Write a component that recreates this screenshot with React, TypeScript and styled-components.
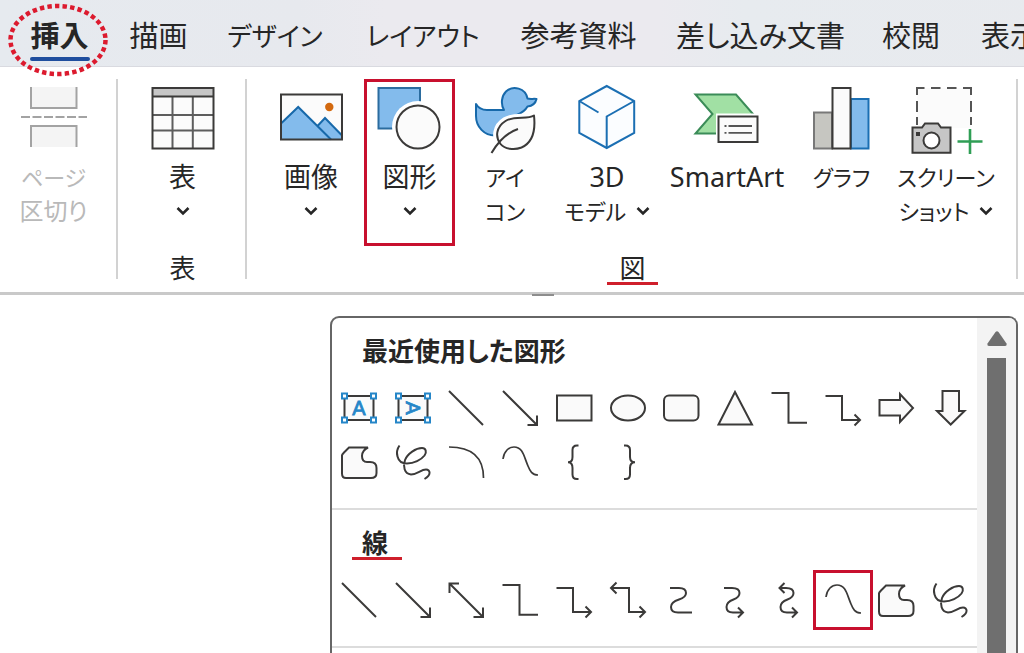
import React from "react";
import styled, { createGlobalStyle, css } from "styled-components";

const ink = "#3b3a39";
const red = "#c8102e";

const GlobalStyle = createGlobalStyle`
  *, *::before, *::after { box-sizing: border-box; }
  body {
    margin: 0;
    background: #fff;
    color: #262626;
    font-family: "Noto Sans", "Noto Sans CJK JP", sans-serif;
    font-feature-settings: "palt";
  }
  button {
    margin: 0;
    padding: 0;
    border: 0;
    background: none;
    color: inherit;
    font: inherit;
    font-feature-settings: inherit;
  }
  svg { display: block; overflow: visible; }
`;

const Page = styled.div`
  display: flex;
  flex-direction: column;
  height: 100vh;
  overflow: hidden;
`;

const TabBar = styled.nav`
  display: grid;
  grid-template-columns: 101fr 97fr 136fr 160fr 151fr 213fr 88fr 110fr;
  padding: 15px 0 6px 9px;
  margin-right: -41px;
  border-bottom: 1px solid #d9dae0;
  background: linear-gradient(90deg, #e6eaef 0%, #e7e9ee 28%, #ebeaef 36%, #ebeaef 62%, #e7ebef 70%, #e8eaee 100%);
`;

const Tab = styled.button<{ $active?: boolean; $kana?: boolean }>`
  position: relative;
  display: flex;
  flex-direction: column;
  align-items: center;
  height: 45px;
  font-size: ${(p) => (p.$kana ? "26px" : "29px")};
  line-height: 42px;
  white-space: nowrap;
  font-weight: ${(p) => (p.$active ? 700 : 400)};

  ${(p) =>
    p.$active &&
    css`
      &::after {
        content: "";
        width: 60px;
        height: 4px;
        flex: none;
        border-radius: 2px;
        background: #1f4e9e;
      }
    `}
`;

const DottedRing = styled.svg`
  position: absolute;
  z-index: 1;
  left: 50%;
  top: -12px;
  width: 100px;
  height: 74px;
  margin-left: -52px;
`;

const Ribbon = styled.section`
  display: grid;
  grid-template-columns: 118fr 129fr 771fr 6fr;
  padding: 12px 0 6px;
  border-bottom: 3px solid #c9c9c9;
`;

const Group = styled.div`
  position: relative;
  display: flex;
  flex-direction: column;
  min-width: 0;
  height: 207px;

  &::after {
    content: "";
    position: absolute;
    right: 0;
    top: 0;
    width: 2px;
    height: 200px;
    background: #d2d2d2;
  }
`;

const GroupTools = styled.div<{ $columns: string; $inset?: string }>`
  display: grid;
  grid-template-columns: ${(p) => p.$columns};
  padding: ${(p) => p.$inset ?? "0"};
  height: 167px;
`;

const GroupName = styled.div`
  display: flex;
  justify-content: center;
  margin-top: 5px;
  font-size: 26px;
  line-height: 34px;
`;

const Marked = styled.span`
  display: inline-block;
  padding: 4px 12px 0;
  border-bottom: 3px solid #cf1f2b;
  line-height: 27px;
`;

const Tool = styled.button<{ $disabled?: boolean; $framed?: boolean }>`
  position: relative;
  display: flex;
  flex-direction: column;
  align-items: center;
  min-width: 0;
  padding-top: 5px;
  color: ${(p) => (p.$disabled ? "#b9b9b9" : "inherit")};
  line-height: 34px;
  white-space: nowrap;

  ${(p) =>
    p.$framed &&
    css`
      box-shadow: inset 0 0 0 3px ${red};
    `}
`;

const ToolArt = styled.svg`
  flex: none;
  width: 76px;
  height: 72px;
  margin-bottom: 4px;
`;

const LabelLine = styled.span<{ $kana?: boolean; $mixed?: boolean }>`
  display: flex;
  align-items: center;
  justify-content: center;
  gap: 10px;
  height: 34px;
  font-size: ${(p) => (p.$kana ? "22px" : p.$mixed ? "24px" : "27px")};
`;

const Workspace = styled.main`
  position: relative;
  flex: 1;
  min-height: 0;
  display: grid;
  grid-template-columns: 330fr 688fr 6fr;
  padding-top: 21px;
`;

const Handle = styled.span`
  position: absolute;
  top: -1px;
  left: 52%;
  width: 22px;
  height: 2px;
  background: #8d8d8d;
`;

const Gallery = styled.section`
  grid-column: 2;
  display: flex;
  min-height: 0;
  overflow: hidden;
  border: 2px solid #666;
  border-bottom: 0;
  border-radius: 9px 9px 0 0;
  background: #fff;
`;

const Sections = styled.div`
  flex: 1;
  min-width: 0;
`;

const Section = styled.section`
  padding: 16px 0 19px;
  border-bottom: 2px solid #dcdcdc;
`;

const SectionTitle = styled.h2<{ $marked?: boolean }>`
  display: table;
  height: 34px;
  margin: 0 0 13px 20px;
  padding: 0 14px 0 10px;
  font-size: 26px;
  font-weight: 700;
  line-height: 34px;

  ${(p) =>
    p.$marked &&
    css`
      padding-top: 4px;
      line-height: 27px;
      border-bottom: 3px solid #cf1f2b;
    `}
`;

const ShapeGrid = styled.div`
  display: grid;
  grid-template-columns: repeat(12, 1fr);
  grid-auto-rows: 54px;
`;

const ShapeButton = styled.button<{ $framed?: boolean }>`
  position: relative;
  display: flex;
  align-items: center;
  justify-content: center;

  ${(p) =>
    p.$framed &&
    css`
      &::after {
        content: "";
        position: absolute;
        inset: -3px;
        border: 3px solid ${red};
      }
    `}
`;

const ShapeArt = styled.svg`
  width: 38px;
  height: 38px;
  fill: none;
  stroke: ${ink};
  stroke-width: 2;
`;

const ScrollTrack = styled.div`
  flex: none;
  display: flex;
  flex-direction: column;
  align-items: center;
  gap: 12px;
  width: 39px;
  padding-top: 13px;
  background: #f3f3f3;
`;

const ScrollThumb = styled.div`
  flex: 1;
  width: 19px;
  background: #6f6f6f;
`;

const Chevron = () => (
  <svg width="14" height="10" viewBox="0 0 14 10" fill="none" stroke="#262626" strokeWidth="2.6">
    <path d="M1.5 2L7 7.5L12.5 2" />
  </svg>
);

const PageBreakArt = () => (
  <ToolArt viewBox="15 84 76 72" fill="#f4f4f4" stroke="#a3a3a3" strokeWidth="2">
    <path d="M30 87V108H75.500V87" />
    <path d="M30 147V126H75.500V147" />
    <path d="M20 117H86" strokeDasharray="9 2.500" strokeWidth="1.800" />
  </ToolArt>
);

const TableArt = () => (
  <ToolArt viewBox="145 84 76 72" fill="none">
    <rect x="152.500" y="88" width="61" height="60.500" fill="#fbfbfb" />
    <rect x="152.500" y="88" width="61" height="8.500" fill="#c6c6c6" />
    <path d="M172.500 97V148M192.800 97V148M153 115H213M153 130.500H213" stroke="#5d5d5d" strokeWidth="2" />
    <path d="M152.500 96.500H213.500" stroke={ink} strokeWidth="1.800" />
    <rect x="152.500" y="88" width="61" height="60.500" stroke={ink} strokeWidth="2" />
  </ToolArt>
);

const PictureArt = () => (
  <ToolArt viewBox="273 84 76 72" fill="none">
    <rect x="281" y="94.500" width="61" height="45" fill="#fbfbfb" />
    <path d="M317 126.500L325 118L342 135.500V139.500H329Z" fill="#83bbec" />
    <path d="M281 123.500L298.200 107L331 139.500H281Z" fill="#83bbec" />
    <path d="M281 123.500L298.200 107L331 139.500M317.500 126L325 118L342 135.500" stroke="#1769aa" strokeWidth="2" />
    <circle cx="329.300" cy="107" r="4.200" fill="#d3690f" />
    <rect x="281" y="94.500" width="61" height="45" stroke={ink} strokeWidth="2" />
  </ToolArt>
);

const ShapesArt = () => (
  <ToolArt viewBox="372 84 76 72">
    <rect x="378.500" y="88" width="41.500" height="40.500" fill="#83bbec" stroke="#2b6c9f" strokeWidth="2" />
    <circle cx="418" cy="127" r="26" fill="#fff" />
    <circle cx="418" cy="127" r="21.500" fill="#fbfbfb" stroke={ink} strokeWidth="2" />
  </ToolArt>
);

const DuckArt = () => (
  <ToolArt viewBox="467 84 76 72" strokeWidth="2" strokeLinejoin="round">
    <path
      d="M476 104C478.500 108.500 482 110 487 110H504C500.500 104 501.500 96 506 91.500C513 85 525.500 88 527.500 98.500C530.500 99.500 533 98.500 536.500 99C535.500 103.500 532 106 527.500 106.500C525 111 521.500 113 517 115L496 135.500C484 136 476 126.500 476 116Z"
      fill="#83bbec"
      stroke="#1769aa"
    />
    <path d="M534 115.500C527 120 515 115 505.500 121C496 127 495 137 500.500 144C504.500 149 514 150.500 521.500 147.500C534 142 535.500 129 534 115.500Z" fill="#fff" stroke="#fff" strokeWidth="8" />
    <path d="M534 115.500C527 120 515 115 505.500 121C496 127 495 137 500.500 144C504.500 149 514 150.500 521.500 147.500C534 142 535.500 129 534 115.500Z" fill="#fbfbfb" stroke={ink} />
    <path d="M518 129C506 133 498 142 491.500 153" fill="none" stroke={ink} />
  </ToolArt>
);

const CubeArt = () => (
  <ToolArt viewBox="569 84 76 72" fill="none" stroke="#1b6fb3" strokeWidth="2">
    <path d="M606.700 86L634.200 101V133L606.700 148L579.300 133V101Z" fill="#fbfdff" />
    <path d="M634.200 101L606.700 116.500V148M579.300 101L598.500 112.500" />
  </ToolArt>
);

const SmartArtArt = () => (
  <ToolArt viewBox="689 84 76 72" strokeWidth="2">
    <path d="M695.500 94.500H736L753 114L736 133.500H695.500L712.500 114Z" fill="#a1e0a4" stroke="#3b8c58" />
    <rect x="716" y="113.500" width="46" height="32" fill="#fff" />
    <rect x="718.500" y="116.500" width="39" height="25.500" fill="#fbfbfb" stroke={ink} />
    <path d="M728.500 126H752M728.500 132.800H752M724.500 126H726.500M724.500 132.800H726.500" stroke="#555" strokeWidth="1.800" />
  </ToolArt>
);

const ChartArt = () => (
  <ToolArt viewBox="804 84 76 72" strokeWidth="2">
    <rect x="814" y="112.500" width="18" height="36" fill="#c6c6c1" stroke="#787878" />
    <rect x="851" y="99" width="17.500" height="49.500" fill="#83bbec" stroke="#1b6fb3" />
    <rect x="832.500" y="88" width="18" height="60.500" fill="#fbfbfb" stroke={ink} />
  </ToolArt>
);

const ScreenshotArt = () => (
  <ToolArt viewBox="908 84 76 72" fill="none" stroke="#555" strokeWidth="2">
    <rect x="917" y="88" width="54" height="40" fill="#fbfbfb" stroke="none" />
    <path d="M917 95V88H924.500M931 88H940.500M947 88H956.500M963 88H971V95M971 101V112M971 117V125M917 101V112M917 117V125" />
    <path d="M912.500 127.500H922L925 123.500H938L941 127.500H950.500V152.800H912.500Z" fill="#c6c6c6" stroke={ink} />
    <circle cx="931.500" cy="140.500" r="8" fill="#fff" stroke={ink} />
    <rect x="916" y="132" width="4" height="4" fill={ink} stroke="none" />
    <path d="M970 129V154M957.500 141.500H982.500" stroke="#2f9e55" strokeWidth="2.600" />
  </ToolArt>
);

type ShapeName =
  | "textBox" | "verticalTextBox" | "line" | "arrow" | "doubleArrow" | "rect" | "ellipse" | "roundRect"
  | "triangle" | "elbow" | "elbowArrow" | "elbowDouble" | "rightArrow" | "downArrow" | "freeform"
  | "scribble" | "arc" | "curve" | "leftBrace" | "rightBrace" | "curved" | "curvedArrow" | "curvedDouble";

const pale = "#fafafa";
const blue = "#2586c8";

const TextFrame = ({ angle }: { angle: number }) => (
  <>
    <rect x="4.500" y="7" width="29" height="24" fill={pale} />
    <g fill="#fff" stroke={blue}>
      <rect x="2" y="4.500" width="5" height="5" />
      <rect x="31" y="4.500" width="5" height="5" />
      <rect x="2" y="28.500" width="5" height="5" />
      <rect x="31" y="28.500" width="5" height="5" />
    </g>
    <text
      x="19"
      y="26"
      textAnchor="middle"
      fontSize="20"
      fontFamily="'Liberation Sans', sans-serif"
      fill={blue}
      stroke={blue}
      strokeWidth="0.800"
      transform={`rotate(${angle} 19 19)`}
    >
      A
    </text>
  </>
);

const shapes: Record<ShapeName, React.ReactNode> = {
  textBox: <TextFrame angle={0} />,
  verticalTextBox: <TextFrame angle={90} />,
  line: <path d="M2 2L36 36" />,
  arrow: <path d="M2 2L36 36M26.500 36H36V26.500" />,
  doubleArrow: <path d="M2.500 2.500L36 36M26.500 36H36V26.500M2.500 12V2.500H12" />,
  rect: <rect x="2" y="6.500" width="34.500" height="25" fill={pale} />,
  ellipse: <ellipse cx="19" cy="19" rx="17" ry="12.500" fill={pale} />,
  roundRect: <rect x="2" y="6.500" width="34.500" height="25" rx="5" fill={pale} />,
  triangle: <path d="M19 3L36 35.500H2.500Z" fill={pale} />,
  elbow: <path d="M1.500 4H18.500V33.800H37" />,
  elbowArrow: <path d="M1.500 7H18V31H36M30.500 25.500L36 31L30.500 36.500" />,
  elbowDouble: <path d="M2 7H20V31H36M30.500 25.500L36 31L30.500 36.500M7.500 1.500L2 7L7.500 12.500" />,
  rightArrow: <path d="M2.500 11H23V5L36 19L23 33V26.500H2.500Z" fill={pale} />,
  downArrow: <path d="M11.500 2H28V22H33.500L19.700 35.500L6 22H11.500Z" fill={pale} />,
  freeform: (
    <path
      d="M9 4.500H28C24 6.500 22 9.500 22 13C22 17 24 19 27 19H30C34 19 36.500 21 36.500 25V30C36.500 33.500 35 35 31 35H6C3 35 2 33.500 2 30.500V12.500C2 11.500 3 10.500 4 9.500Z"
      fill={pale}
    />
  ),
  scribble: (
    <path d="M5.500 2.500C3 6 2.500 10 3.500 13.500C4.500 17.500 8 20.500 13 20.500C20 20.500 27 17 30.500 12.500C33 9 32 5 28 5C22 5 13.500 10.500 11 17C9 23 10 31 17 31.500C23 31.500 27 26.500 32 26.500C36.500 26.500 37.500 32 30.500 36" />
  ),
  arc: <path d="M2 4C25 4 36.500 15 36.500 35" strokeWidth="1.700" />,
  curve: <path d="M2 16C3 8 8 4 13 4C22 4 23 14 27 23C29 28 31 32 37 32" strokeWidth="1.700" />,
  leftBrace: (
    <path d="M23.500 2.500H22C19 2.500 17.500 4 17.500 7V14C17.500 17.500 16 19.300 13 19.300C16 19.300 17.500 21.500 17.500 25V31.500C17.500 34.500 19 36 22 36H23.500" />
  ),
  rightBrace: (
    <path d="M15 2.500H16.500C19.500 2.500 21 4 21 7V14C21 17.500 22.500 19.300 26 19.300C22.500 19.300 21 21.500 21 25V31.500C21 34.500 19.500 36 16.500 36H15" />
  ),
  curved: <path d="M8 7H17C22 7 24 9 24 12C24 15 22 17 17 18.500C12 20 9 22 9 26C9 29.500 11.500 31.500 16 31.500H30" />,
  curvedArrow: (
    <path d="M8 7H16C21 7 23.500 9 23.500 12C23.500 15 21.500 17 17.500 18.500C13.500 20 10.500 22 10.500 26C10.500 29.500 13 31.500 17 31.500H27M22 26.500L27 31.500L22 36.500" />
  ),
  curvedDouble: (
    <path d="M9.500 7H16C21 7 23.500 9 23.500 12C23.500 15 21.500 17 17.500 18.500C13.500 20 10.500 22 10.500 26C10.500 29.500 13 31.500 17 31.500H27M22 26.500L27 31.500L22 36.500M14.500 2L9.500 7L14.500 12" />
  ),
};

const recent: ShapeName[] = [
  "textBox", "verticalTextBox", "line", "arrow", "rect", "ellipse", "roundRect", "triangle", "elbow",
  "elbowArrow", "rightArrow", "downArrow", "freeform", "scribble", "arc", "curve", "leftBrace", "rightBrace",
];

const lines: ShapeName[] = [
  "line", "arrow", "doubleArrow", "elbow", "elbowArrow", "elbowDouble", "curved", "curvedArrow",
  "curvedDouble", "curve", "freeform", "scribble",
];

const ShapeList = ({ names, framed }: { names: ShapeName[]; framed?: ShapeName }) => (
  <ShapeGrid>
    {names.map((name) => (
      <ShapeButton key={name} type="button" aria-label={name} $framed={name === framed}>
        <ShapeArt viewBox="0 0 38 38">{shapes[name]}</ShapeArt>
      </ShapeButton>
    ))}
  </ShapeGrid>
);

const tabs = [
  { name: "描画" },
  { name: "デザイン", kana: true },
  { name: "レイアウト", kana: true },
  { name: "参考資料" },
  { name: "差し込み文書" },
  { name: "校閲" },
  { name: "表示" },
];

export default function App() {
  return (
    <Page>
      <GlobalStyle />
      <TabBar>
        <Tab type="button" $active>
          挿入
          <DottedRing viewBox="0 0 100 74" fill="none" stroke="#dc1a2e" strokeWidth="4.500" strokeDasharray="4.400 3.200">
            <ellipse cx="50" cy="37" rx="47.500" ry="34" />
          </DottedRing>
        </Tab>
        {tabs.map((tab) => (
          <Tab key={tab.name} type="button" $kana={tab.kana}>{tab.name}</Tab>
        ))}
      </TabBar>

      <Ribbon>
        <Group>
          <GroupTools $columns="1fr" $inset="0 11px 0 0">
            <Tool type="button" $disabled>
              <PageBreakArt />
              <LabelLine $kana>ページ</LabelLine>
              <LabelLine $mixed>区切り</LabelLine>
            </Tool>
          </GroupTools>
        </Group>
        <Group>
          <GroupTools $columns="1fr">
            <Tool type="button">
              <TableArt />
              <LabelLine>表</LabelLine>
              <LabelLine><Chevron /></LabelLine>
            </Tool>
          </GroupTools>
          <GroupName>表</GroupName>
        </Group>
        <Group>
          <GroupTools $columns="106fr 91fr 100fr 104fr 136fr 93fr 116fr" $inset="0 14px 0 11px">
            <Tool type="button">
              <PictureArt />
              <LabelLine>画像</LabelLine>
              <LabelLine><Chevron /></LabelLine>
            </Tool>
            <Tool type="button" $framed>
              <ShapesArt />
              <LabelLine>図形</LabelLine>
              <LabelLine><Chevron /></LabelLine>
            </Tool>
            <Tool type="button">
              <DuckArt />
              <LabelLine $kana>アイ</LabelLine>
              <LabelLine $kana>コン</LabelLine>
            </Tool>
            <Tool type="button">
              <CubeArt />
              <LabelLine>3D</LabelLine>
              <LabelLine $kana>モデル<Chevron /></LabelLine>
            </Tool>
            <Tool type="button">
              <SmartArtArt />
              <LabelLine>SmartArt</LabelLine>
            </Tool>
            <Tool type="button">
              <ChartArt />
              <LabelLine $kana>グラフ</LabelLine>
            </Tool>
            <Tool type="button">
              <ScreenshotArt />
              <LabelLine $kana>スクリーン</LabelLine>
              <LabelLine $kana>ショット<Chevron /></LabelLine>
            </Tool>
          </GroupTools>
          <GroupName><Marked>図</Marked></GroupName>
        </Group>
      </Ribbon>

      <Workspace>
        <Handle />
        <Gallery>
          <Sections>
            <Section>
              <SectionTitle>最近使用した図形</SectionTitle>
              <ShapeList names={recent} />
            </Section>
            <Section>
              <SectionTitle $marked>線</SectionTitle>
              <ShapeList names={lines} framed="curve" />
            </Section>
          </Sections>
          <ScrollTrack>
            <svg width="20" height="15" viewBox="0 0 20 15" fill="#6f6f6f">
              <path d="M8.500 1Q10 -0.500 11.500 1L19.500 12.500Q20 15 18 15H2Q0 15 0.500 12.500Z" />
            </svg>
            <ScrollThumb />
          </ScrollTrack>
        </Gallery>
      </Workspace>
    </Page>
  );
}
